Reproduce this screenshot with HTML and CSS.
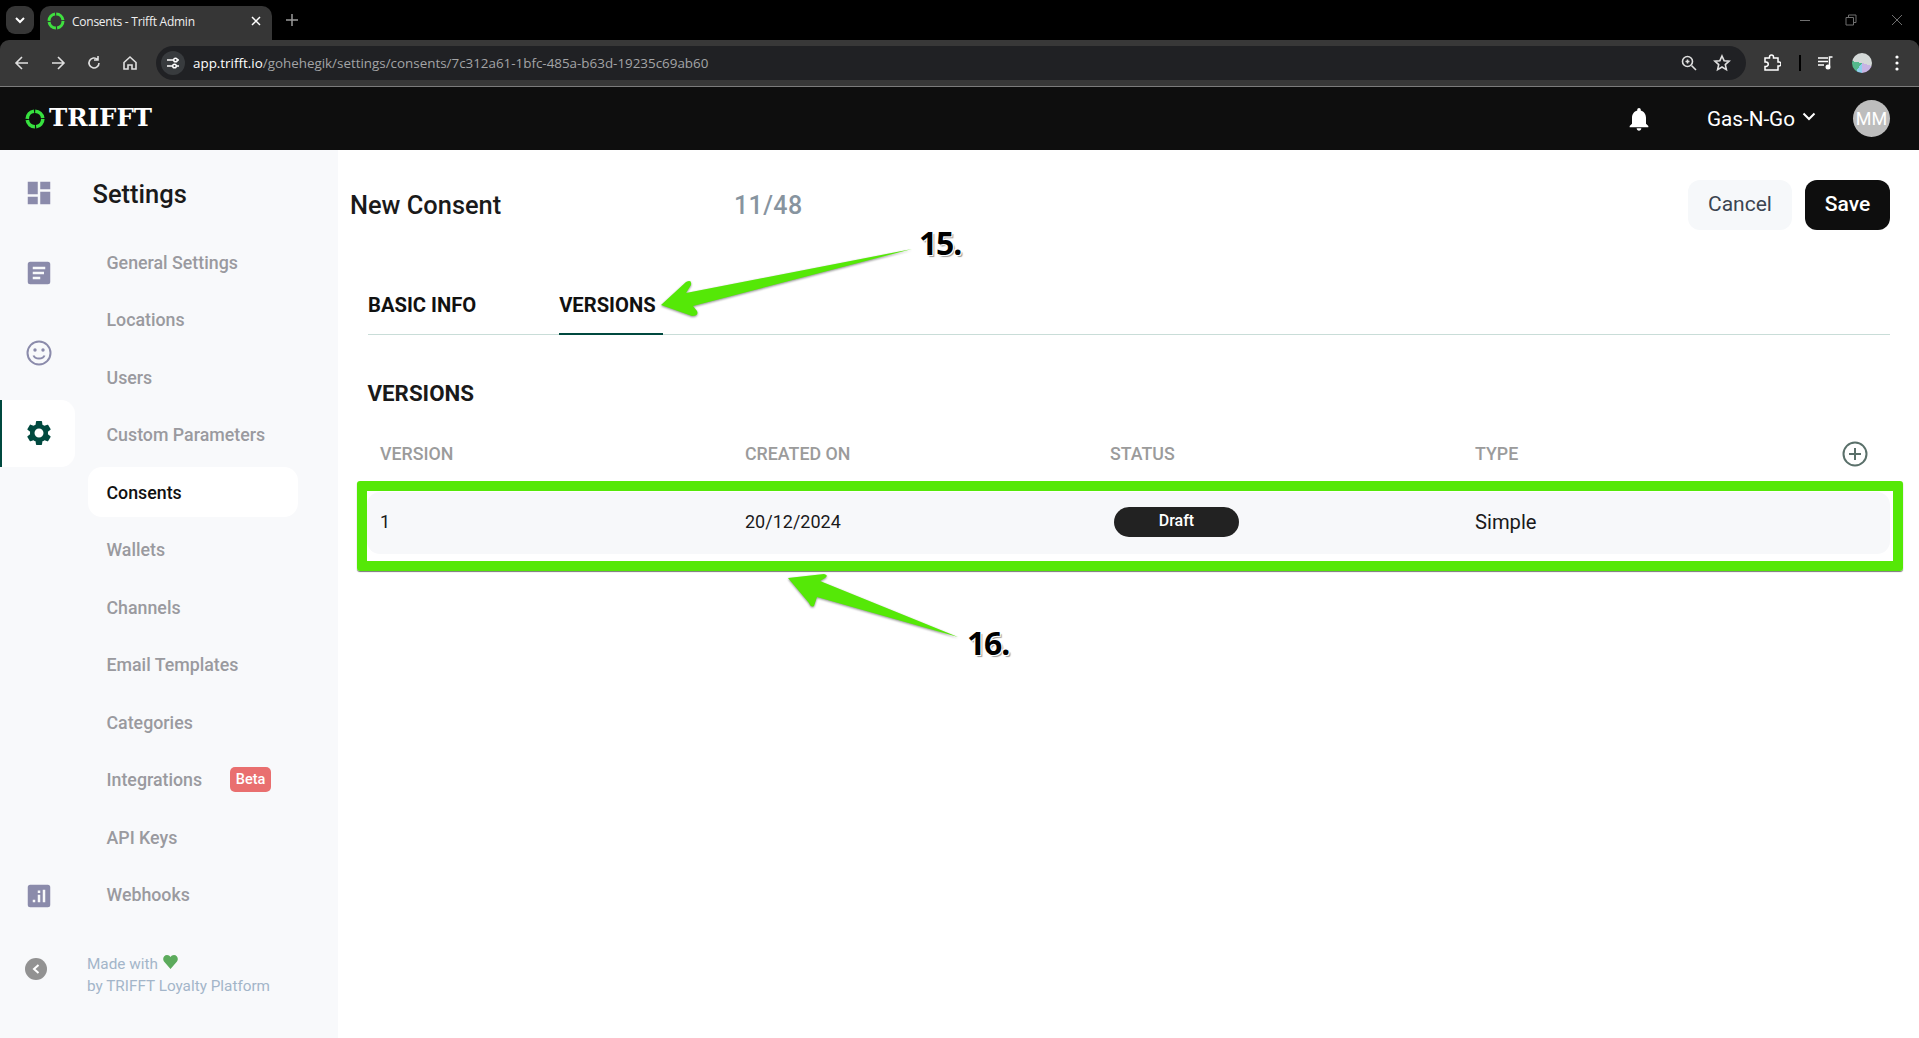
FILE: index.html
```html
<!DOCTYPE html>
<html lang="en">
<head>
<meta charset="utf-8">
<title>Consents - Trifft Admin</title>
<link rel="stylesheet" href="styles.css">
</head>
<body>
<div class="chrome">
  <div class="tabstrip">
    <div class="tabsearch"><svg width="12" height="12" viewBox="0 0 12 12"><path d="M2 4l4 4 4-4" class="st-white2"/></svg></div>
    <div class="tab">
      <svg class="fav" width="18" height="18" viewBox="0 0 18 18"><circle cx="9" cy="9" r="7" class="ring"/></svg>
      <span class="tabtitle">Consents - Trifft Admin</span>
      <svg class="tabx" width="10" height="10" viewBox="0 0 10 10"><path d="M1 1l8 8M9 1l-8 8" class="st-white15"/></svg>
    </div>
    <svg class="newtab" width="12" height="12" viewBox="0 0 12 12"><path d="M6 0v12M0 6h12" class="st-gray15"/></svg>
    <div class="winctl">
      <svg width="12" height="12" viewBox="0 0 12 12"><path d="M1 6.5h10" class="st-dim"/></svg>
      <svg width="12" height="12" viewBox="0 0 12 12"><path d="M1 3.5h7.500v7.500h-7.500zM3.500 3.500v-2.500h7.500v7.500h-2.500" class="st-dim"/></svg>
      <svg width="12" height="12" viewBox="0 0 12 12"><path d="M1 1l10 10M11 1l-10 10" class="st-dim"/></svg>
    </div>
  </div>
  <div class="toolbar">
    <div class="navbtns">
      <svg width="16" height="16" viewBox="0 0 16 16"><path d="M14 8H2M8 2L2 8l6 6" class="st-light"/></svg>
      <svg width="16" height="16" viewBox="0 0 16 16"><path d="M2 8h12M8 2l6 6-6 6" class="st-light"/></svg>
      <svg width="16" height="16" viewBox="0 0 16 16"><path d="M13 8a5 5 0 1 1-1.500-3.600M12 1v4h-4" class="st-light"/></svg>
      <svg width="16" height="16" viewBox="0 0 16 16"><path d="M2 7.500L8 2l6 5.500V14h-4v-4H6v4H2z" class="st-light"/></svg>
    </div>
    <div class="omnibox">
      <div class="siteinfo"><svg width="14" height="14" viewBox="0 0 14 14"><path d="M1 4h6M11 10h2M1 10h5M12 4h1" class="st-white15"/><circle cx="9.500" cy="4" r="1.800" class="st-white15"/><circle cx="8.500" cy="10" r="1.800" class="st-white15"/></svg></div>
      <div class="url"><span class="host">app.trifft.io</span>/gohehegik/settings/consents/7c312a61-1bfc-485a-b63d-19235c69ab60</div>
      <svg class="zoomic" width="16" height="16" viewBox="0 0 16 16"><circle cx="6.500" cy="6.500" r="5" class="st-light"/><path d="M10.500 10.500L15 15M4.500 6.500h4M6.500 4.500v4" class="st-light"/></svg>
      <svg class="star" width="18" height="18" viewBox="0 0 18 18"><path d="M9 2l2.100 4.700 5 .5-3.800 3.400 1.100 5L9 13l-4.400 2.600 1.100-5L1.900 7.200l5-.5z" class="st-light"/></svg>
    </div>
    <div class="tools">
      <svg width="18" height="18" viewBox="0 0 18 18"><path d="M2 4h4.500V3a2 2 0 0 1 4 0v1H15v4h1a2 2 0 0 1 0 4h-1v4H2v-3.500h1a2.200 2.200 0 0 0 0-4.500H2z" class="st-white15"/></svg>
      <div class="tsep"></div>
      <svg width="16" height="14" viewBox="0 0 16 14"><path d="M0 2h10M0 5.500h10M0 9h6M14.500 1h-3v9" class="st-white15"/><circle cx="10" cy="11" r="2.500" class="fill-white"/></svg>
      <div class="profile"></div>
      <svg class="dots" width="4" height="16" viewBox="0 0 4 16"><circle cx="2" cy="2" r="1.600" class="fill-white"/><circle cx="2" cy="8" r="1.600" class="fill-white"/><circle cx="2" cy="14" r="1.600" class="fill-white"/></svg>
    </div>
  </div>
</div>

<header class="apphead">
  <div class="logo">
    <svg width="20" height="20" viewBox="0 0 20 20"><circle cx="10" cy="10" r="7.800" class="ring2"/></svg>
    <span class="logotext">TRIFFT</span>
  </div>
  <svg class="bell" width="28" height="28" viewBox="0 0 24 24"><path class="fill-white" d="M12 22c1.100 0 2-.9 2-2h-4c0 1.100.89 2 2 2zm6-6v-5c0-3.070-1.640-5.640-4.500-6.320V4c0-.83-.67-1.500-1.500-1.500s-1.500.67-1.500 1.500v.68C7.630 5.360 6 7.920 6 11v5l-2 2v1h16v-1l-2-2z"/></svg>
  <div class="org">Gas-N-Go</div>
  <svg class="orgchev" width="14" height="9" viewBox="0 0 14 9"><path d="M1.500 1.500l5.500 5.500 5.500-5.500" class="st-white2"/></svg>
  <div class="avatar">MM</div>
</header>

<div class="app">
  <aside class="sidebar">
    <div class="rail">
      <div class="railitem"><svg class="ic30" viewBox="0 0 24 24"><path d="M3 13h8V3H3v10zm0 8h8v-6H3v6zm10 0h8V11h-8v10zm0-18v6h8V3h-8z"/></svg></div>
      <div class="railitem"><svg class="ic30" viewBox="0 0 24 24"><path fill-rule="evenodd" d="M5 3h14a2 2 0 0 1 2 2v14a2 2 0 0 1-2 2H5a2 2 0 0 1-2-2V5a2 2 0 0 1 2-2zm2 4v2h10V7H7zm0 4v2h9v-2H7zm0 4v2h6v-2H7z"/></svg></div>
      <div class="railitem"><svg class="ic26" viewBox="0 0 26 26"><circle cx="13" cy="13" r="11.500" class="smile"/><path d="M7.500 15.500c1.500 4 9.500 4 11 0" class="smile"/><circle cx="9" cy="10" r="1.700"/><circle cx="17" cy="10" r="1.700"/></svg></div>
      <div class="railitem active"><svg class="ic30 gear" viewBox="0 0 24 24"><path d="M19.140 12.940c.04-.3.06-.61.06-.94 0-.32-.02-.64-.07-.94l2.030-1.580c.18-.14.23-.41.12-.61l-1.920-3.320c-.12-.22-.37-.29-.59-.22l-2.390.96c-.5-.38-1.030-.7-1.620-.94l-.36-2.540c-.04-.24-.24-.41-.48-.41h-3.840c-.24 0-.43.17-.47.41l-.36 2.540c-.59.24-1.130.57-1.620.94l-2.390-.96c-.22-.08-.47 0-.59.22L2.740 8.870c-.12.21-.08.47.12.61l2.030 1.580c-.05.3-.09.63-.09.94s.02.64.07.94l-2.030 1.580c-.18.14-.23.41-.12.61l1.920 3.320c.12.22.37.29.59.22l2.390-.96c.5.38 1.030.7 1.620.94l.36 2.540c.05.24.24.41.48.41h3.840c.24 0 .44-.17.47-.41l.36-2.540c.59-.24 1.130-.56 1.620-.94l2.390.96c.22.08.47 0 .59-.22l1.920-3.320c.12-.22.07-.47-.12-.61l-2.010-1.580zM12 15.600c-1.980 0-3.600-1.620-3.600-3.600s1.620-3.600 3.600-3.600 3.600 1.620 3.600 3.600-1.620 3.600-3.600 3.600z"/></svg></div>
      <div class="railitem webhooks"><svg class="ic30" viewBox="0 0 24 24"><path fill-rule="evenodd" d="M5 3h14a2 2 0 0 1 2 2v14a2 2 0 0 1-2 2H5a2 2 0 0 1-2-2V5a2 2 0 0 1 2-2zm2 12v2h2v-2H7zm4-4v6h2v-6h-2zm4-4v10h2V7h-2zM11 7.500v2h2v-2h-2z"/></svg></div>
      <div class="collapse"><svg width="10" height="12" viewBox="0 0 10 12"><path d="M7.500 2L3 6l4.500 4" class="st-white2"/></svg></div>
    </div>
    <div class="subcol">
      <h2 class="settitle">Settings</h2>
      <nav class="subnav">
        <a class="navlink">General Settings</a>
        <a class="navlink">Locations</a>
        <a class="navlink">Users</a>
        <a class="navlink">Custom Parameters</a>
        <a class="navlink current">Consents</a>
        <a class="navlink">Wallets</a>
        <a class="navlink">Channels</a>
        <a class="navlink">Email Templates</a>
        <a class="navlink">Categories</a>
        <a class="navlink">Integrations<span class="beta">Beta</span></a>
        <a class="navlink">API Keys</a>
        <a class="navlink">Webhooks</a>
      </nav>
      <div class="madewith">
        <div>Made with <svg class="heart" width="15" height="14" viewBox="0 0 15 14"><path d="M7.500 14L1 6.500C-1 3.500 1 0 4 0c1.500 0 2.800.8 3.500 2C8.200.8 9.500 0 11 0c3 0 5 3.500 3 6.500z"/></svg></div>
        <div>by TRIFFT Loyalty Platform</div>
      </div>
    </div>
  </aside>

  <main class="content">
    <div class="topbar">
      <h1 class="title">New Consent</h1>
      <div class="counter">11/48</div>
      <div class="actions">
        <button class="btn cancel">Cancel</button>
        <button class="btn save">Save</button>
      </div>
    </div>
    <div class="tabs">
      <div class="apptab">BASIC INFO</div>
      <div class="apptab on">VERSIONS</div>
    </div>
    <h3 class="sect">VERSIONS</h3>
    <div class="thead">
      <div>VERSION</div><div>CREATED ON</div><div>STATUS</div><div>TYPE</div>
      <svg class="plus" width="26" height="26" viewBox="0 0 26 26"><circle cx="13" cy="13" r="11.500" class="st-plus"/><path d="M13 7v12M7 13h12" class="st-plus"/></svg>
    </div>
    <div class="trow">
      <div>1</div><div>20/12/2024</div><div><span class="pill">Draft</span></div><div class="simple">Simple</div>
    </div>
  </main>
</div>

<div class="greenbox"></div>
<svg class="arrows" width="1919" height="1038" viewBox="0 0 1919 1038">
  <path class="arrow" d="M912 249L686 293 691 285Q692 279 686 282L661 305 692 316Q699 316 697 311L693 306z"/>
  <path class="arrow" d="M958 637L817 597 814 606Q811 608 809 603L788 578 824 574Q829 575 825 578L820 581z"/>
</svg>
<div class="note n15">15.</div>
<div class="note n16">16.</div>
</body>
</html>
```

FILE: styles.css
```css
* { box-sizing: border-box; }
html, body { margin: 0; padding: 0; }
body {
  width: 1919px;
  height: 1038px;
  overflow: hidden;
  background: #fff;
  font-family: Roboto, "Liberation Sans", sans-serif;
  color: #1a1a1a;
  position: relative;
}
svg { display: block; flex: none; }
.st-white2 { fill: none; stroke: #fff; stroke-width: 2; }
.st-white15 { fill: none; stroke: #fff; stroke-width: 1.5; }
.st-gray15 { fill: none; stroke: #9a9a9a; stroke-width: 1.5; }
.st-dim { fill: none; stroke: #6f6f6f; stroke-width: 1; }
.st-light { fill: none; stroke: #dfdfdf; stroke-width: 1.6; }
.fill-white { fill: #fff; }
.ring { fill: none; stroke: #3fe03f; stroke-width: 3; stroke-dasharray: 9.800 1.200; }
.ring2 { fill: none; stroke: #37e23f; stroke-width: 3.600; stroke-dasharray: 11 1.250; }

/* browser chrome */
.chrome { height: 87px; background: #000; border-bottom: 1px solid #7c7c7c; }
.tabstrip { height: 40px; display: flex; align-items: flex-start; position: relative; }
.tabsearch {
  width: 28px; height: 28px; margin: 6px 0 0 6px; border-radius: 9px;
  background: #363636; display: flex; align-items: center; justify-content: center;
}
.tab {
  width: 232px; height: 34px; margin: 6px 0 0 6px; padding: 0 11px 4px 7px;
  background: #363636; border-radius: 10px 10px 0 0;
  display: flex; align-items: center; gap: 7px;
}
.tabtitle { flex: 1; font: 12px "Open Sans", sans-serif; color: #efefef; letter-spacing: -0.25px; white-space: nowrap; }
.newtab { margin: 14px 0 0 14px; }
.winctl { margin-left: auto; display: flex; gap: 34px; padding: 14px 16px 0 0; }
.toolbar {
  height: 46px; background: #383838; border-radius: 9px 9px 0 0;
  display: flex; align-items: center; padding-right: 19px;
}
.navbtns { width: 156px; padding-left: 14px; display: flex; gap: 20px; }
.omnibox {
  width: 1590px; height: 34px; background: #202124; border-radius: 17px;
  display: flex; align-items: center; padding: 0 15px 0 5px;
}
.siteinfo {
  width: 24px; height: 24px; border-radius: 50%; background: #383b3e;
  display: flex; align-items: center; justify-content: center;
}
.url { margin-left: 8px; flex: 1; font: 13.400px "Open Sans", sans-serif; color: #a3a4a6; white-space: nowrap; }
.host { color: #fff; }
.zoomic { margin-right: 16px; }
.tools { flex: 1; display: flex; align-items: center; padding-left: 17px; gap: 17.500px; }
.tsep { width: 2px; height: 16px; background: #000; }
.profile {
  width: 20px; height: 20px; border-radius: 50%;
  background: conic-gradient(#d4d9d8 0 30%, #c7b4e3 30% 50%, #8fd0ee 50% 60%, #55b98c 60% 78%, #d4d9d8 78%);
}
.dots { margin-left: 6px; }

/* app header */
.apphead {
  height: 63px; background: #0e0e0e; color: #fff;
  display: flex; align-items: center; padding: 0 29px 0 25px;
}
.logo { display: flex; align-items: center; gap: 4px; margin-right: auto; }
.logotext { font: bold 24.500px "DejaVu Serif", serif; color: #fff; line-height: 1; }
.bell { margin-right: 54px; }
.org { font-size: 20.700px; color: #fff; }
.orgchev { margin: -5px 0 0 7px; }
.avatar {
  width: 37px; height: 37px; margin-left: 37px; border-radius: 50%; background: #bdbdbd;
  color: #fff; font-size: 18px; display: flex; align-items: center; justify-content: center;
}

/* layout */
.app { display: flex; height: 888px; }
.sidebar { width: 338px; flex: none; background: #f8f9fb; display: flex; }
.rail { width: 75px; flex: none; padding: 9.500px 0 0; display: flex; flex-direction: column; gap: 13px; }
.railitem { height: 67px; padding-left: 3px; display: flex; align-items: center; justify-content: center; position: relative; }
.railitem.active { background: #fff; border-left: 2px solid #00493f; border-radius: 0 14px 14px 0; padding-left: 1px; }
.railitem.webhooks { margin-top: 383px; }
.ic30 { width: 30px; height: 30px; fill: #8b8bab; }
.ic26 { width: 26px; height: 26px; fill: #8b8bab; }
.smile { fill: none; stroke: #8b8bab; stroke-width: 2; }
.gear { fill: #00493f; }
.collapse {
  width: 22px; height: 22px; margin: 15.500px 0 0 25px; border-radius: 50%; background: #929292;
  display: flex; align-items: center; justify-content: center;
}
.subcol { flex: 1; min-width: 0; padding: 0 40px 0 13px; display: flex; flex-direction: column; }
.settitle { margin: 28px 0 0 4.500px; font-size: 25.500px; line-height: 32px; font-weight: 500; color: #1a1a1a; }
.subnav { margin-top: 27px; display: flex; flex-direction: column; gap: 7.500px; }
.navlink {
  height: 50px; padding-left: 18.500px; border-radius: 14px;
  display: flex; align-items: center;
  font-size: 17.800px; font-weight: 500; color: #9a9a9f;
}
.navlink.current { background: #fff; color: #111; }
.beta {
  margin-left: 28px; width: 41px; height: 25px; border-radius: 5px; background: #e96f6f;
  color: #fff; font-size: 14.500px; display: flex; align-items: center; justify-content: center;
}
.madewith { margin: 33px 0 0 -1px; font-size: 15.300px; line-height: 22px; color: #a3b5c9; white-space: nowrap; }
.madewith > div { display: flex; align-items: center; gap: 5px; }
.heart { fill: #5cab5c; margin-top: -3px; }

/* content */
.content { flex: 1; min-width: 0; padding: 30px 29px 0 12px; }
.topbar { height: 50px; display: flex; align-items: center; }
.title { margin: 0; width: 384px; font-size: 25.400px; font-weight: 500; color: #1a1a1a; }
.counter { font-size: 25px; font-weight: 500; color: #87949f; letter-spacing: 0.400px; }
.actions { margin-left: auto; display: flex; gap: 13px; }
.btn { height: 50px; border: 0; border-radius: 12px; font: 400 21px Roboto, sans-serif; padding: 0 0 2px; }
.cancel { width: 104px; background: #f6f8fa; color: #3b4450; }
.save { width: 85px; background: #0e0e0e; color: #fff; font-weight: 500; }
.tabs { margin: 54px 0 0 18px; height: 51px; border-bottom: 1px solid #c9ddd8; display: flex; gap: 76px; }
.apptab { height: 51px; padding-right: 7px; font-size: 20.200px; font-weight: 700; line-height: 42px; color: #111; }
.apptab.on { border-bottom: 2px solid #00493f; }
.sect { margin: 42px 0 0 17.500px; font-size: 22.300px; line-height: 32px; font-weight: 700; color: #1a1a1a; }
.thead, .trow { display: grid; grid-template-columns: repeat(4, 365px); align-items: center; margin-left: 17px; padding-left: 13px; position: relative; }
.thead { height: 60px; margin-top: 14px; font-size: 17.800px; font-weight: 500; color: #9b9b9b; }
.plus { position: absolute; right: 22px; top: 18px; }
.st-plus { fill: none; stroke: #5a706a; stroke-width: 2; }
.trow { height: 62px; margin-top: 9px; padding-bottom: 3px; background: #f7f8fa; border-radius: 13px; font-size: 18px; color: #1a1a1a; }
.simple { font-size: 20.200px; }
.pill {
  margin-left: 4px; width: 125px; height: 30px; border-radius: 15px; background: #222;
  display: flex; align-items: center; justify-content: center;
  color: #fff; font-size: 16px; font-weight: 500; padding-bottom: 3px;
}

/* annotations over the screenshot */
.greenbox {
  position: absolute; left: 357px; top: 481px; width: 1546px; height: 89.500px;
  border: 10px solid #55e807; border-radius: 3px; box-shadow: 0 1px 1px #777;
}
.arrows { position: absolute; left: 0; top: 0; pointer-events: none; }
.arrow { fill: #55e807; filter: drop-shadow(0 1px 1px rgba(0,0,0,.45)); }
.note {
  position: absolute; font: 700 32px "Noto Sans", sans-serif; color: #000; letter-spacing: -1.200px; line-height: 40px;
  text-shadow: 1px 1px 0 #fff, -1px -1px 0 #fff, 1px -1px 0 #fff, -1px 1px 0 #fff, 2px 2px 1px #999;
}
.n15 { left: 919px; top: 223px; }
.n16 { left: 967px; top: 623px; }
```
